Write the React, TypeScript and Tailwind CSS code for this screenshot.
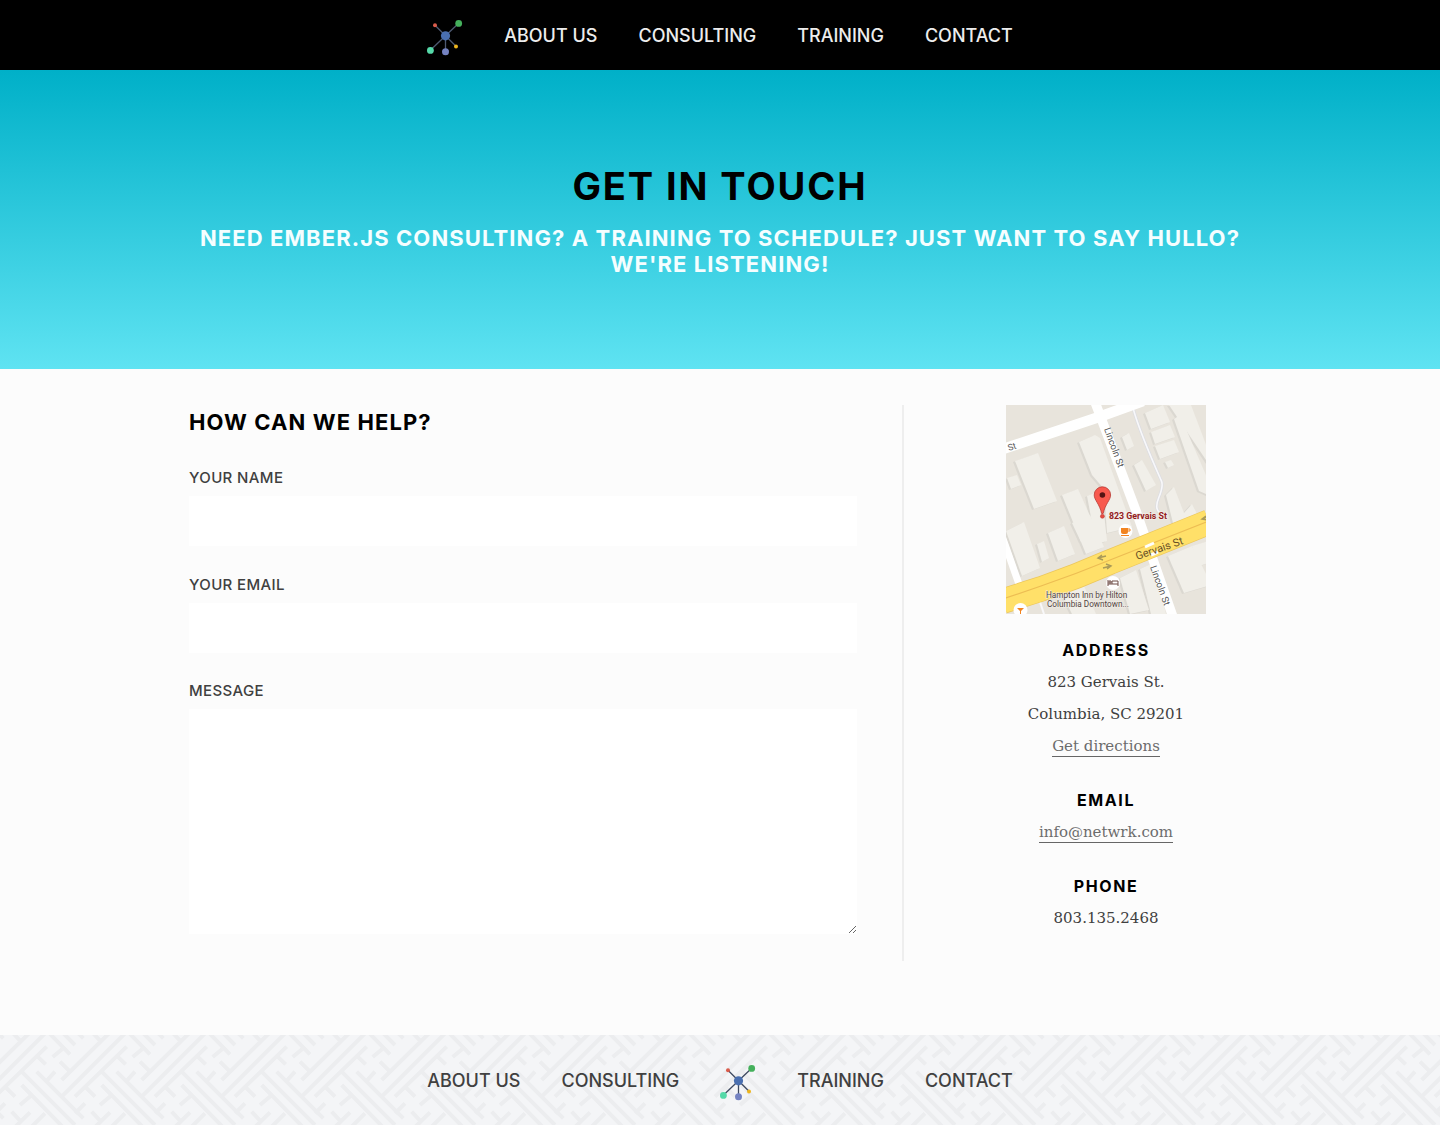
import type { ReactNode } from "react";

function Logo({ line }: { line: string }) {
  return (
    <svg viewBox="0 0 36 36" className="mt-1 block size-9 shrink-0" aria-hidden="true">
      <g stroke={line} strokeWidth="1.3">
        <path d="M18.5 15.8 8 5.3M18.5 15.8 31.7 3.3M18.5 15.8 3.3 30.3M18.5 15.8V31.7M18.5 15.8 29 26.3" />
      </g>
      <circle cx="18.5" cy="15.8" r="4.6" fill="#4a6fb0" />
      <circle cx="8" cy="5.3" r="2" fill="#d95b4b" />
      <circle cx="31.7" cy="3.4" r="3.4" fill="#45b05c" />
      <circle cx="3.4" cy="30.4" r="3.4" fill="#56d9a9" />
      <circle cx="18.5" cy="31.7" r="3.5" fill="#7583c2" />
      <circle cx="29" cy="26.4" r="2" fill="#edb51d" />
    </svg>
  );
}

const buildings = [
  "9,56 32,48 51,96 28,104",
  "1,73 11,70 15,80 5,84",
  "73,37 89,30 94,33 126,122 101,128 98,84 86,70",
  "56,90 72,84 98,142 80,149",
  "81,91 91,87 98,108 101,136 90,139",
  "116,32 123,28 128,41 121,45",
  "128,60 136,55 150,80 140,86",
  "139,8 157,0 164,17 145,24",
  "145,27 164,20 169,32 149,39",
  "149,41 168,35 173,47 154,54",
  "159,57 165,55 168,60 162,63",
  "163,0 185,0 202,45 202,58",
  "168,14 174,10 202,75 202,90 193,86",
  "160,90 168,82 178,108 186,99 200,127 172,138",
  "0,126 18,117 34,163 16,171",
  "31,139 38,136 43,153 36,157",
  "42,128 58,121 69,149 52,156",
  "66,118 84,110 92,130 75,137",
  "162,151 186,141 202,173 202,181 178,188",
  "114,173 130,165 143,205 124,209",
  "134,164 147,158 160,209 145,209",
  "56,189 78,181 90,209 66,209",
  "186,141 202,136 202,158 193,161",
];

function StreetMap() {
  return (
    <svg viewBox="0 0 200 209" className="block h-[209px] w-[200px]" role="img" aria-label="Map of 823 Gervais St">
      <rect width="200" height="209" fill="#e8e4dc" />
      <g fill="#dbd8d1" transform="translate(-2 1)">
        {buildings.map((p) => (
          <polygon key={p} points={p} />
        ))}
      </g>
      <g fill="#f1efe9">
        {buildings.map((p) => (
          <polygon key={p} points={p} />
        ))}
      </g>
      <path d="M127 3C133 25 143 48 155 75Q158 80 153 92T154 108" fill="none" stroke="#dcdde2" strokeWidth="3" />
      <path d="M127 3C133 25 143 48 155 75Q158 80 153 92T154 108" fill="none" stroke="#f8f8fa" strokeWidth="1.6" />
      <path d="M30 185 38 209" stroke="#f8f8fa" strokeWidth="2" />
      <g fill="none" stroke="#fff">
        <path d="M-3 44 93 12 137 -4" strokeWidth="10.5" />
        <path d="M89 -3 129 103 167 212" strokeWidth="9.5" />
        <path d="M-4 131 14 182" strokeWidth="7" />
      </g>
      <path d="M-3 196 35 184Q70 172 104 157L203 117" fill="none" stroke="#ecc75c" strokeWidth="25.5" />
      <path d="M-3 196 35 184Q70 172 104 157L203 117" fill="none" stroke="#ffe069" strokeWidth="24" />
      <path d="M-3 194 35 181Q70 169 104 155L203 116" fill="none" stroke="#edbd53" strokeWidth="1.2" />
      <path d="m139 142 9-4M145 150l7-3" stroke="#fff" strokeWidth="3" />
      <g fill="none" stroke="#aa9a58" strokeWidth="1.5">
        <path d="m100 151-8 2m4-3-4 3 5 2M97 163l8-2m-5-2 5 2-4 3M203 111l-7 3m4-3-4 3 5 1" />
      </g>
      <g fontFamily="Roboto, sans-serif">
        <text x="3" y="46" fontSize="9" fill="#555" transform="rotate(-19 3 46)">St</text>
        <text x="98" y="24" fontSize="9.5" fill="#555" transform="rotate(70 98 24)">Lincoln St</text>
        <text x="144" y="162" fontSize="9.5" fill="#555" transform="rotate(70 144 162)">Lincoln St</text>
        <text x="131" y="155" fontSize="11" fill="#695127" transform="rotate(-19 131 155)">Gervais St</text>
        <text x="103" y="114" fontSize="8.8" fontWeight="700" fill="#941b1d" stroke="#f3eee7" strokeWidth="1.5" paintOrder="stroke">823 Gervais St</text>
        <g fontSize="8.2" fill="#51443f" stroke="#f3efe9" strokeWidth="1" paintOrder="stroke">
          <text x="40" y="193">Hampton Inn by Hilton</text>
          <text x="41" y="202">Columbia Downtown...</text>
        </g>
      </g>
      <circle cx="119.5" cy="126" r="7" fill="#fff" />
      <path d="M115 123h7v4q0 2-2 2h-3q-2 0-2-2zM115 130h8v1h-8z" fill="#f28420" />
      <path d="M122 124h2v2h-2" fill="none" stroke="#f28420" />
      <circle cx="107" cy="178" r="7" fill="#fff" />
      <path d="M102 175v6m0-2h10m0 2v-5h-6v3m-3-3h2v2h-2z" fill="none" stroke="#6f4c46" />
      <circle cx="14.5" cy="205" r="7" fill="#fff" />
      <path d="M11 203h7l-3 3v3h-1v-3z" fill="#f28420" />
      <path d="M88.2 90a8.2 8.2 0 1 1 16.4 0c0 5-5.5 9-7.4 18.5h-1.6C93.7 99 88.2 95 88.2 90z" fill="#f8594e" stroke="#b73a34" strokeWidth=".8" />
      <circle cx="96.4" cy="90" r="2.8" fill="#541313" />
      <circle cx="96.4" cy="111.3" r="2" fill="#e64b42" stroke="#b73a34" strokeWidth=".5" />
    </svg>
  );
}

const fretLines =
  "M65 110 225 270M110 110 250 250M65 150 210 298M-15 185 140 35M185 135 330 -8M185 185 375 -5" +
  "M110 62 137 88M165 110 138 140M180 80 210 110M15 155 45 185M92 183 60 210M187 42 158 66M255 205 225 235M35 230 65 262";
const tileOffsets = [-240, 0, 240];

function FretPattern() {
  return (
    <svg className="absolute inset-0 size-full" aria-hidden="true">
      <defs>
        <pattern id="fret" width="80" height="80" patternUnits="userSpaceOnUse">
          <g fill="none" stroke="#ecedef" strokeWidth="12" transform="scale(0.33333)">
            {tileOffsets.map((x) =>
              tileOffsets.map((y) => <path key={`${x} ${y}`} d={fretLines} transform={`translate(${x} ${y})`} />),
            )}
          </g>
        </pattern>
      </defs>
      <rect width="100%" height="100%" fill="url(#fret)" />
    </svg>
  );
}

function NavLink({ children }: { children: ReactNode }) {
  return (
    <a href="#" className="text-center text-lg leading-6 font-medium whitespace-nowrap uppercase">
      {children}
    </a>
  );
}

function Detail({ title, children }: { title: string; children: ReactNode }) {
  return (
    <section className="flex flex-col items-center">
      <h3 className="font-['Inter',sans-serif] text-base leading-[31px] font-bold tracking-widest text-black uppercase">{title}</h3>
      {children}
    </section>
  );
}

export default function App() {
  return (
    <div className="min-h-screen bg-[#fcfcfc] font-['Inter',sans-serif] text-[#404040]">
      <header className="bg-black text-[#ededed]">
        <nav className="flex h-[70px] items-center justify-center gap-[41px] pt-0.5" aria-label="Main">
          <a href="#" aria-label="Home"><Logo line="#4e5a72" /></a>
          <NavLink>About us</NavLink>
          <NavLink>Consulting</NavLink>
          <NavLink>Training</NavLink>
          <NavLink>Contact</NavLink>
        </nav>
      </header>

      <section className="bg-linear-to-b/srgb from-[#00b0c8] to-[#5fe3f2] px-8 pt-[92px] pb-[92px] text-center uppercase">
        <h1 className="text-[38px] leading-12 font-bold tracking-wider text-black">Get in touch</h1>
        <p className="mx-auto mt-[15px] max-w-[1080px] text-[22px] leading-[26px] font-bold tracking-wider text-[#f5feff]">
          Need Ember.js consulting? A training to schedule? Just want to say hullo? We're listening!
        </p>
      </section>

      <main className="mx-auto flex max-w-[1126px] px-8 pt-9 pb-[74px]">
        <form className="grow pr-[45px]">
          <h2 className="text-[22px] leading-[34px] font-bold tracking-wider text-black uppercase">How can we help?</h2>
          <label htmlFor="name" className="mt-[27px] block text-[15px] leading-6 font-medium tracking-wide uppercase">Your name</label>
          <input id="name" type="text" className="mt-1.5 block h-[50px] w-full bg-white px-3 outline-none" />
          <label htmlFor="email" className="mt-[27px] block text-[15px] leading-6 font-medium tracking-wide uppercase">Your email</label>
          <input id="email" type="email" className="mt-1.5 block h-[50px] w-full bg-white px-3 outline-none" />
          <label htmlFor="message" className="mt-[26px] block text-[15px] leading-6 font-medium tracking-wide uppercase">Message</label>
          <textarea id="message" className="mt-1.5 block h-[225px] w-full resize bg-white p-3 outline-none" />
        </form>
        <aside className="flex w-[349px] shrink-0 flex-col items-center gap-[21px] border-l-2 border-[#eeeeee] pb-[27px] pl-[57px] font-['DejaVu_Serif',serif] text-[15px] leading-8">
          <StreetMap />
          <Detail title="Address">
            <address className="text-center not-italic">
              823 Gervais St.<br />Columbia, SC 29201
            </address>
            <a href="#" className="mt-1.5 mb-[7px] border-b border-[#666666] leading-5 text-[#6c6c6c]">Get directions</a>
          </Detail>
          <Detail title="Email">
            <a href="mailto:info@netwrk.com" className="mt-1.5 mb-[7px] border-b border-[#666666] leading-5 text-[#6c6c6c]">info@netwrk.com</a>
          </Detail>
          <Detail title="Phone">
            <p>803.135.2468</p>
          </Detail>
        </aside>
      </main>

      <footer className="relative bg-[#f4f5f7]">
        <FretPattern />
        <nav className="relative flex h-[90px] items-center justify-center gap-[41px] pt-0.5" aria-label="Footer">
          <NavLink>About us</NavLink>
          <NavLink>Consulting</NavLink>
          <a href="#" aria-label="Home"><Logo line="#3f4a61" /></a>
          <NavLink>Training</NavLink>
          <NavLink>Contact</NavLink>
        </nav>
      </footer>
    </div>
  );
}
